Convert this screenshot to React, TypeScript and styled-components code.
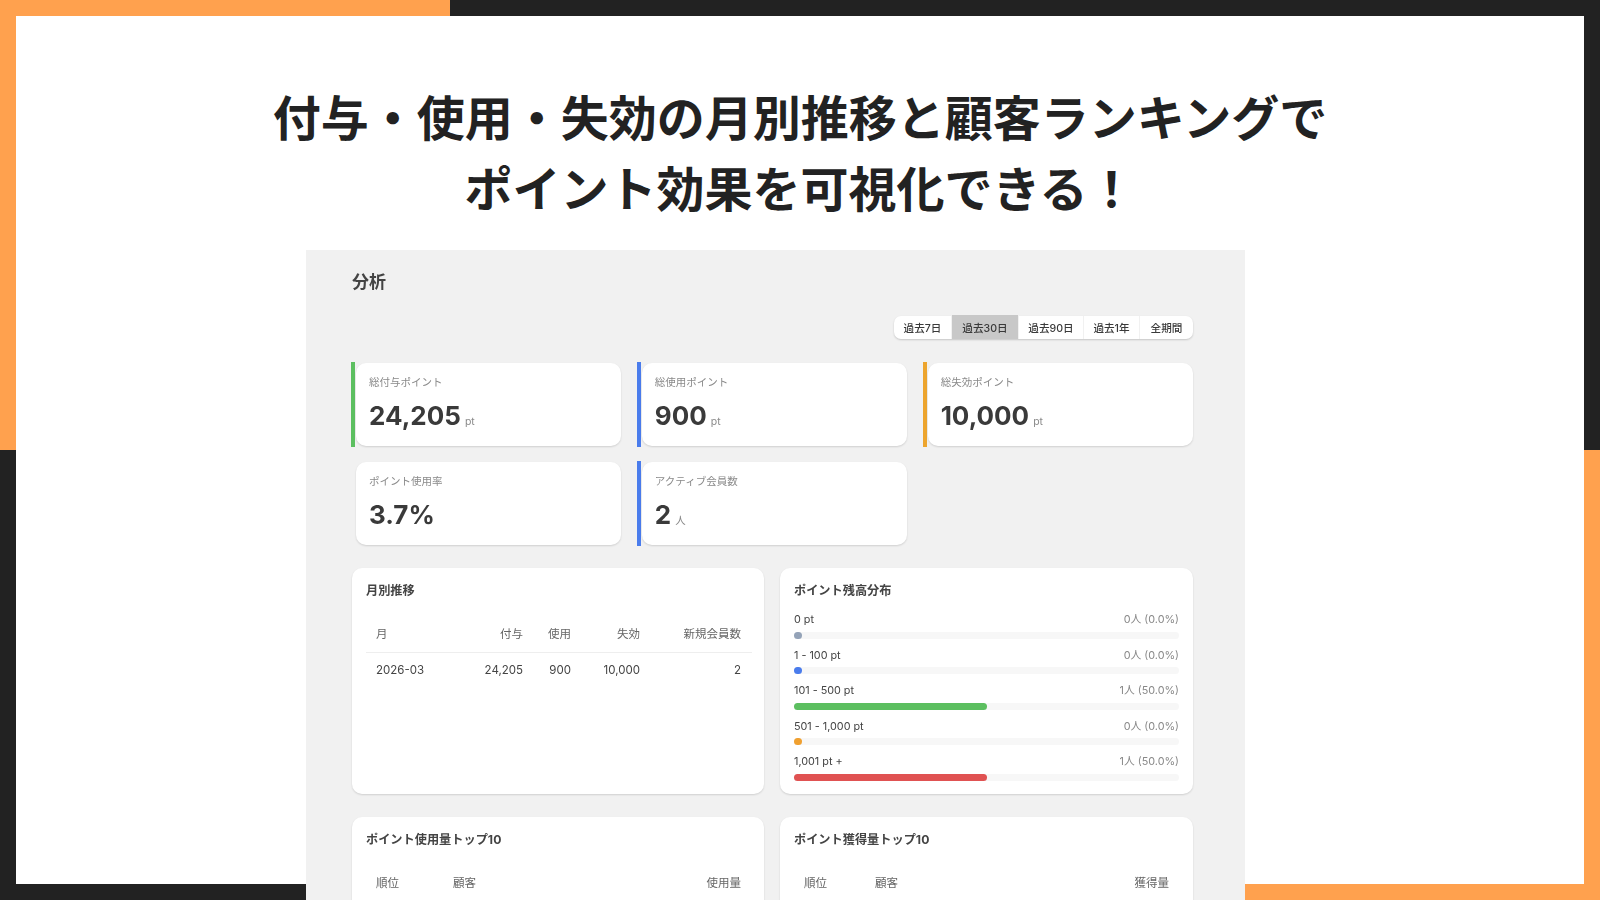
import React from "react";
import styled, { createGlobalStyle } from "styled-components";

const ORANGE = "#ffa14e";
const INK = "#222222";
const UI_FONT = `Inter, "Noto Sans CJK JP", sans-serif`;

const GlobalStyle = createGlobalStyle`
  html, body {
    margin: 0;
    padding: 0;
    background: ${INK};
  }
  * {
    box-sizing: border-box;
  }
`;

const periods = ["過去7日", "過去30日", "過去90日", "過去1年", "全期間"];
const periodWidths = [58, 67, 65, 56, 53];

const stats = [
  { label: "総付与ポイント", value: "24,205", unit: "pt", accent: "#5cbf60" },
  { label: "総使用ポイント", value: "900", unit: "pt", accent: "#4a7cec" },
  { label: "総失効ポイント", value: "10,000", unit: "pt", accent: "#eda52e" },
  { label: "ポイント使用率", value: "3.7%", unit: "", accent: "transparent" },
  { label: "アクティブ会員数", value: "2", unit: "人", accent: "#4a7cec" },
];

const balances = [
  { label: "0 pt", count: "0人 (0.0%)", pct: 0, color: "#94a3b8" },
  { label: "1 - 100 pt", count: "0人 (0.0%)", pct: 0, color: "#4a7cec" },
  { label: "101 - 500 pt", count: "1人 (50.0%)", pct: 50, color: "#5cbf60" },
  { label: "501 - 1,000 pt", count: "0人 (0.0%)", pct: 0, color: "#f0a030" },
  { label: "1,001 pt +", count: "1人 (50.0%)", pct: 50, color: "#e05252" },
];

const App: React.FC = () => {
  return (
    <Page>
      <GlobalStyle />
      <Sheet>
        <Headline>
          付与・使用・失効の月別推移と顧客ランキングで
          <br />
          ポイント効果を可視化できる！
        </Headline>
        <Panel>
          <PanelTitle>分析</PanelTitle>
          <PeriodBar>
            <PeriodGroup>
              {periods.map((p, i) => (
                <PeriodTab key={p} $active={i === 1} $width={periodWidths[i]}>
                  {p}
                </PeriodTab>
              ))}
            </PeriodGroup>
          </PeriodBar>
          <StatGrid>
            {stats.map((s) => (
              <StatCell key={s.label} $accent={s.accent}>
                <StatCard>
                  <StatLabel>{s.label}</StatLabel>
                  <StatValue>
                    {s.value}
                    {s.unit && <StatUnit>{s.unit}</StatUnit>}
                  </StatValue>
                </StatCard>
              </StatCell>
            ))}
          </StatGrid>
          <CardRow>
            <Card>
              <CardTitle>月別推移</CardTitle>
              <Table>
                <colgroup>
                  <Col $w={89} />
                  <Col $w={79} />
                  <Col $w={48} />
                  <Col $w={69} />
                  <Col $w={101} />
                </colgroup>
                <thead>
                  <tr>
                    <Th>月</Th>
                    <Th $right>付与</Th>
                    <Th $right>使用</Th>
                    <Th $right>失効</Th>
                    <Th $right>新規会員数</Th>
                  </tr>
                </thead>
                <tbody>
                  <tr>
                    <Td>2026-03</Td>
                    <Td $right>24,205</Td>
                    <Td $right>900</Td>
                    <Td $right>10,000</Td>
                    <Td $right>2</Td>
                  </tr>
                </tbody>
              </Table>
            </Card>
            <Card>
              <CardTitle>ポイント残高分布</CardTitle>
              <BalanceList>
                {balances.map((b) => (
                  <BalanceRow key={b.label}>
                    <BalanceHead>
                      <span>{b.label}</span>
                      <BalanceCount>{b.count}</BalanceCount>
                    </BalanceHead>
                    <Track>
                      <Fill $pct={b.pct} $color={b.color} />
                    </Track>
                  </BalanceRow>
                ))}
              </BalanceList>
            </Card>
          </CardRow>
          <CardRow>
            <Card>
              <CardTitle>ポイント使用量トップ10</CardTitle>
              <Table>
                <colgroup>
                  <Col $w={77} />
                  <Col />
                  <Col $w={100} />
                </colgroup>
                <thead>
                  <tr>
                    <Th>順位</Th>
                    <Th>顧客</Th>
                    <Th $right>使用量</Th>
                  </tr>
                </thead>
              </Table>
            </Card>
            <Card>
              <CardTitle>ポイント獲得量トップ10</CardTitle>
              <Table>
                <colgroup>
                  <Col $w={71} />
                  <Col />
                  <Col $w={100} />
                </colgroup>
                <thead>
                  <tr>
                    <Th>順位</Th>
                    <Th>顧客</Th>
                    <Th $right>獲得量</Th>
                  </tr>
                </thead>
              </Table>
            </Card>
          </CardRow>
        </Panel>
      </Sheet>
    </Page>
  );
};

const Page = styled.div`
  width: 1600px;
  height: 900px;
  overflow: hidden;
  padding: 16px;
  background-color: ${INK};
  background-image: linear-gradient(${ORANGE}, ${ORANGE}),
    linear-gradient(${ORANGE}, ${ORANGE}),
    linear-gradient(${ORANGE}, ${ORANGE}),
    linear-gradient(${ORANGE}, ${ORANGE});
  background-size: 450px 16px, 16px 450px, 16px 450px, 450px 16px;
  background-position: left top, left top, right bottom, right bottom;
  background-repeat: no-repeat;
`;
const Sheet = styled.div`
  height: 868px;
  background: #ffffff;
  padding-top: 64px;
`;
const Headline = styled.h1`
  margin: 0 0 28px;
  font-family: "Noto Sans CJK JP", sans-serif;
  font-size: 48px;
  line-height: 71px;
  font-weight: 700;
  color: ${INK};
  text-align: center;
`;
const Panel = styled.div`
  width: 939px;
  height: 652px;
  margin-left: 290px;
  padding: 20px 52px 0 46px;
  background: #f1f1f1;
  font-family: ${UI_FONT};
  overflow: hidden;
  filter: blur(0.3px);
`;
const PanelTitle = styled.h2`
  margin: 0 0 22px;
  font-size: 17px;
  line-height: 24px;
  font-weight: 700;
  color: #444444;
`;
const PeriodBar = styled.div`
  display: flex;
  justify-content: flex-end;
  margin-bottom: 23px;
`;
const PeriodGroup = styled.div`
  display: flex;
  height: 23px;
  border-radius: 7px;
  background: #ffffff;
  box-shadow: 0 1px 2px rgba(0, 0, 0, 0.18);
`;
const PeriodTab = styled.div<{ $active?: boolean; $width: number }>`
  width: ${(p) => p.$width}px;
  height: ${(p) => (p.$active ? "24px" : "23px")};
  margin-top: ${(p) => (p.$active ? "-1px" : "0")};
  display: flex;
  align-items: center;
  justify-content: center;
  font-size: 10.6px;
  font-weight: 500;
  color: #3a3a3a;
  background: ${(p) => (p.$active ? "#c8c8c8" : "transparent")};
  border-right: 1px solid #f1f1f1;
  &:last-child {
    border-right: none;
  }
`;
const StatGrid = styled.div`
  display: grid;
  grid-template-columns: repeat(3, 1fr);
  grid-auto-rows: 85px;
  column-gap: 15.5px;
  row-gap: 14px;
  margin: 0 0 22px -1px;
`;
const StatCell = styled.div<{ $accent: string }>`
  border-left: 4px solid ${(p) => p.$accent};
  padding: 1px 0 1px 1px;
`;
const StatCard = styled.div`
  height: 100%;
  padding: 12px 13px;
  background: #ffffff;
  border-radius: 10px;
  box-shadow: 0 1px 2px rgba(0, 0, 0, 0.14);
`;
const StatLabel = styled.div`
  font-size: 10.5px;
  line-height: 16px;
  color: #8a8a8a;
`;
const StatValue = styled.div`
  margin-top: 8px;
  font-size: 26px;
  line-height: 34px;
  font-weight: 700;
  color: #3a3a3a;
`;
const StatUnit = styled.span`
  margin-left: 4px;
  font-size: 10.5px;
  font-weight: 400;
  color: #8a8a8a;
`;
const CardRow = styled.div`
  display: grid;
  grid-template-columns: 412px 413px;
  column-gap: 16px;
  margin-bottom: 23px;
`;
const Card = styled.div`
  min-height: 224.5px;
  padding: 13.5px 14px;
  background: #ffffff;
  border-radius: 10px;
  box-shadow: 0 1px 2px rgba(0, 0, 0, 0.14);
`;
const CardTitle = styled.h3`
  margin: 0;
  font-size: 12.2px;
  line-height: 18px;
  font-weight: 700;
  color: #444444;
`;
const Table = styled.table`
  width: 386px;
  margin-top: 14.5px;
  border-collapse: collapse;
  table-layout: fixed;
`;
const Col = styled.col<{ $w?: number }>`
  width: ${(p) => (p.$w ? `${p.$w}px` : "auto")};
`;
const Th = styled.th<{ $right?: boolean }>`
  height: 38px;
  padding: 0 11px 0 10px;
  font-size: 11.5px;
  font-weight: 400;
  color: #666666;
  text-align: ${(p) => (p.$right ? "right" : "left")};
  border-bottom: 1px solid #eeeeee;
`;
const Td = styled.td<{ $right?: boolean }>`
  height: 35px;
  padding: 0 11px 0 10px;
  font-size: 11.5px;
  color: #444444;
  text-align: ${(p) => (p.$right ? "right" : "left")};
`;
const BalanceList = styled.div`
  display: flex;
  flex-direction: column;
  gap: 10px;
  margin-top: 13.5px;
`;
const BalanceRow = styled.div`
  display: flex;
  flex-direction: column;
  gap: 4.5px;
`;
const BalanceHead = styled.div`
  display: flex;
  justify-content: space-between;
  font-size: 10.8px;
  line-height: 14px;
  color: #444444;
`;
const BalanceCount = styled.span`
  color: #888888;
`;
const Track = styled.div`
  height: 7px;
  border-radius: 4px;
  background: #f7f7f7;
`;
const Fill = styled.div<{ $pct: number; $color: string }>`
  width: ${(p) => p.$pct}%;
  min-width: 8px;
  height: 100%;
  border-radius: 4px;
  background: ${(p) => p.$color};
`;

export default App;
